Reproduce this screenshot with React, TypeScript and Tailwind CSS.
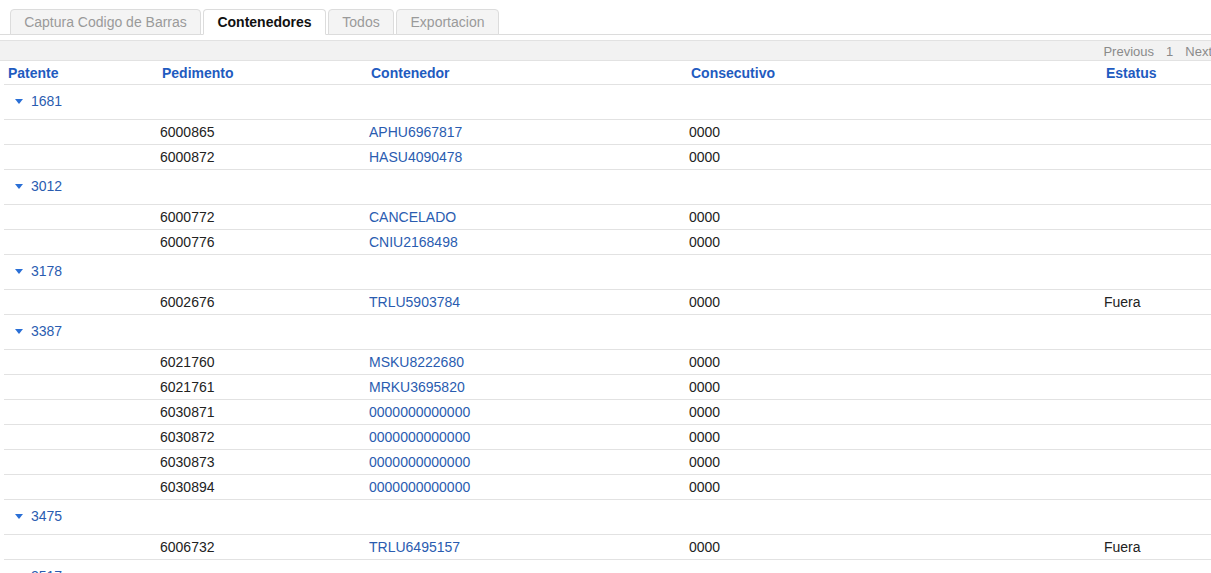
import React from "react";

type Row = { ped: string; cont: string; cons: string; est?: string };
type Group = { pat: string; rows: Row[] };

const groups: Group[] = [
  { pat: "1681", rows: [
    { ped: "6000865", cont: "APHU6967817", cons: "0000" },
    { ped: "6000872", cont: "HASU4090478", cons: "0000" },
  ]},
  { pat: "3012", rows: [
    { ped: "6000772", cont: "CANCELADO", cons: "0000" },
    { ped: "6000776", cont: "CNIU2168498", cons: "0000" },
  ]},
  { pat: "3178", rows: [
    { ped: "6002676", cont: "TRLU5903784", cons: "0000", est: "Fuera" },
  ]},
  { pat: "3387", rows: [
    { ped: "6021760", cont: "MSKU8222680", cons: "0000" },
    { ped: "6021761", cont: "MRKU3695820", cons: "0000" },
    { ped: "6030871", cont: "0000000000000", cons: "0000" },
    { ped: "6030872", cont: "0000000000000", cons: "0000" },
    { ped: "6030873", cont: "0000000000000", cons: "0000" },
    { ped: "6030894", cont: "0000000000000", cons: "0000" },
  ]},
  { pat: "3475", rows: [
    { ped: "6006732", cont: "TRLU6495157", cons: "0000", est: "Fuera" },
  ]},
  { pat: "3517", rows: [] },
];

const cols = "grid grid-cols-[154px_209px_320px_415px_140px]";

function Caret() {
  return (
    <svg width="8" height="5" viewBox="0 0 8 5" className="mr-[8px]">
      <polygon points="0,0 8,0 4,5" fill="#2a6fd6" />
    </svg>
  );
}

const tabBase = "h-[26px] mr-[2px] flex items-center justify-center rounded-t-[4px] border border-[#dcdcdc] text-[14px] -mb-px";
const tabInactive = "bg-[#f4f4f4] text-[#9a9a9a]";

export default function App() {
  return (
    <div
      className="w-[1211px] h-[573px] overflow-hidden bg-white text-[14px] text-[#222]"
      style={{ fontFamily: '"Liberation Sans", Arial, Helvetica, sans-serif' }}
    >
      <div className="pt-[9px] pl-[10px] flex border-b border-[#dcdcdc] h-[35px]">
        <div className={`${tabBase} ${tabInactive} w-[191px]`}>Captura Codigo de Barras</div>
        <div className={`${tabBase} w-[123px] bg-white border-b-white font-bold text-[#111]`}>Contenedores</div>
        <div className={`${tabBase} ${tabInactive} w-[66px]`}>Todos</div>
        <div className={`${tabBase} ${tabInactive} w-[103px]`}>Exportacion</div>
      </div>
      <div className="mt-[5px] h-[21px] pt-[3px] bg-[#f2f2f2] border-y border-[#e2e2e2] flex items-center justify-end text-[13px] text-[#8a8a8a] -mr-[1px]">
        <span>Previous</span>
        <span className="ml-[12px]">1</span>
        <span className="ml-[12px]">Next</span>
      </div>
      <div className="ml-[4px] w-[1260px]">
        <div className={`${cols} h-[24px] pt-[2px] items-center border-b border-[#e2e2e2] font-bold text-[#1f5bc0]`}>
          <div className="pl-[4px]">Patente</div>
          <div className="pl-[4px]">Pedimento</div>
          <div className="pl-[4px]">Contenedor</div>
          <div className="pl-[4px]">Consecutivo</div>
          <div className="pl-[4px]">Estatus</div>
        </div>
        {groups.map((g) => (
          <div key={g.pat}>
            <div className="h-[35px] flex items-center pl-[11px] pb-[1px] border-b border-[#e2e2e2] text-[#2a5cb0]">
              <Caret />
              <span>{g.pat}</span>
            </div>
            {g.rows.map((r, i) => (
              <div key={i} className={`${cols} h-[25px] items-center border-b border-[#e2e2e2]`}>
                <div />
                <div className="pl-[2px]">{r.ped}</div>
                <div className="pl-[2px] text-[#2a5cb0]">{r.cont}</div>
                <div className="pl-[2px]">{r.cons}</div>
                <div className="pl-[2px]">{r.est ?? ""}</div>
              </div>
            ))}
          </div>
        ))}
      </div>
    </div>
  );
}
